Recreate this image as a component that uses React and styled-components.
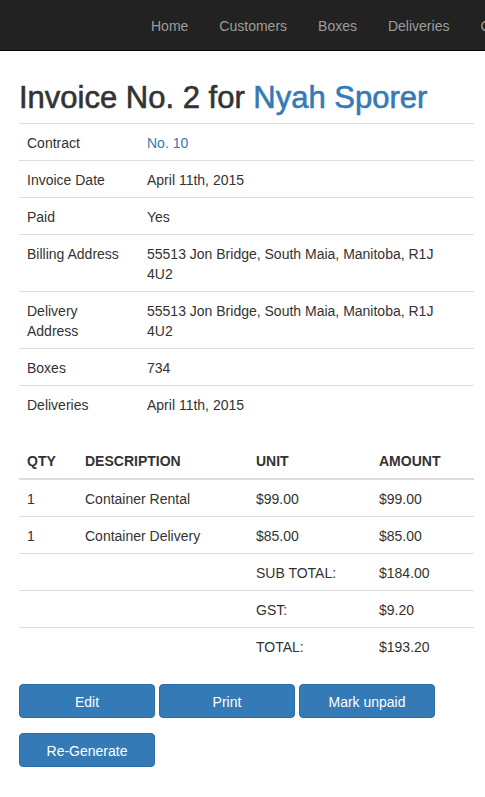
import React from 'react';
import styled, { createGlobalStyle } from 'styled-components';

const GlobalStyle = createGlobalStyle`
  body {
    margin: 0;
    background: #fff;
    color: #333;
    font-family: 'Liberation Sans', Arial, sans-serif;
    font-size: 14px;
    line-height: 20px;
    overflow: hidden;
  }
`;

const Navbar = styled.nav`
  height: 50px;
  background-color: #222;
  border-bottom: 1px solid #080808;
  overflow: hidden;
`;

const NavList = styled.ul`
  display: flex;
  margin: 0;
  padding: 0 0 0 136px;
  list-style: none;
  white-space: nowrap;
`;

const NavLink = styled.a`
  display: block;
  padding: 16px 15px 14px;
  margin-right: 1px;
  line-height: 20px;
  color: #9d9d9d;
  text-decoration: none;
`;

const Container = styled.main`
  padding: 0 11px 0 19px;
`;

const Title = styled.h1`
  margin: 30px 0 9px;
  font-size: 31px;
  line-height: 33px;
  font-weight: 500;
  color: #333;
  -webkit-text-stroke: 0.6px currentColor;
`;

const Link = styled.a`
  color: #337ab7;
  text-decoration: none;
`;

const Table = styled.table`
  width: 100%;
  border-collapse: collapse;
  border-spacing: 0;
  margin-bottom: 20px;
  table-layout: fixed;
`;

const Cell = styled.td`
  padding: 9px 8px 7px;
  line-height: 20px;
  vertical-align: top;
  text-align: left;
  border-top: ${props => (props.first ? 'none' : '1px solid #ddd')};
`;

const HeadCell = styled.th`
  padding: 9px 8px 7px;
  line-height: 20px;
  text-align: left;
  font-weight: bold;
  vertical-align: bottom;
  border-bottom: 2px solid #ddd;
`;

const Address = styled.span`
  display: block;
  max-width: 300px;
`;

const Buttons = styled.div`
  display: flex;
  flex-wrap: wrap;
  column-gap: 4px;
  row-gap: 15px;
  width: 420px;
`;

const Button = styled.button`
  width: 136px;
  height: 34px;
  padding: 7px 12px 5px;
  font-family: inherit;
  font-size: 14px;
  line-height: 20px;
  color: #fff;
  background-color: #337ab7;
  border: 1px solid #2e6da4;
  border-radius: 4px;
  cursor: pointer;
`;

const navItems = ['Home', 'Customers', 'Boxes', 'Deliveries', 'Contracts', 'Invoices'];

const address = '55513 Jon Bridge, South Maia, Manitoba, R1J 4U2';

const details = [
  ['Contract', <Link href="#">No. 10</Link>],
  ['Invoice Date', 'April 11th, 2015'],
  ['Paid', 'Yes'],
  ['Billing Address', <Address>{address}</Address>],
  ['Delivery Address', <Address>{address}</Address>],
  ['Boxes', '734'],
  ['Deliveries', 'April 11th, 2015'],
];

const items = [
  ['1', 'Container Rental', '$99.00', '$99.00'],
  ['1', 'Container Delivery', '$85.00', '$85.00'],
  ['', '', 'SUB TOTAL:', '$184.00'],
  ['', '', 'GST:', '$9.20'],
  ['', '', 'TOTAL:', '$193.20'],
];

export default function App() {
  return (
    <>
      <GlobalStyle />
      <Navbar>
        <NavList>
          {navItems.map(item => (
            <li key={item}>
              <NavLink href="#">{item}</NavLink>
            </li>
          ))}
        </NavList>
      </Navbar>
      <Container>
        <Title>
          Invoice No. 2 for <Link href="#">Nyah Sporer</Link>
        </Title>
        <Table>
          <colgroup>
            <col style={{ width: 120 }} />
            <col />
          </colgroup>
          <tbody>
            {details.map(([label, value]) => (
              <tr key={label}>
                <Cell>{label}</Cell>
                <Cell>{value}</Cell>
              </tr>
            ))}
          </tbody>
        </Table>
        <Table>
          <colgroup>
            <col style={{ width: 58 }} />
            <col style={{ width: 171 }} />
            <col style={{ width: 123 }} />
            <col />
          </colgroup>
          <thead>
            <tr>
              <HeadCell>QTY</HeadCell>
              <HeadCell>DESCRIPTION</HeadCell>
              <HeadCell>UNIT</HeadCell>
              <HeadCell>AMOUNT</HeadCell>
            </tr>
          </thead>
          <tbody>
            {items.map((row, i) => (
              <tr key={i}>
                {row.map((value, j) => (
                  <Cell key={j} first={i === 0}>
                    {value}
                  </Cell>
                ))}
              </tr>
            ))}
          </tbody>
        </Table>
        <Buttons>
          <Button>Edit</Button>
          <Button>Print</Button>
          <Button>Mark unpaid</Button>
          <Button>Re-Generate</Button>
        </Buttons>
      </Container>
    </>
  );
}
